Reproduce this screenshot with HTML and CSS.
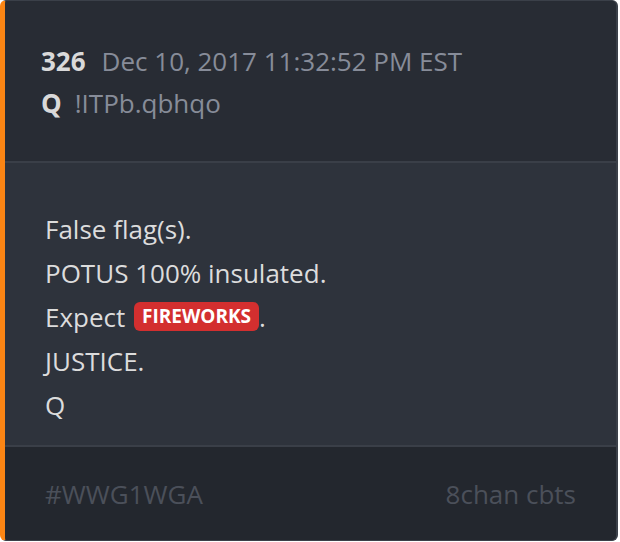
FILE: index.html
```html
<!DOCTYPE html>
<html>
<head>
<meta charset="utf-8">
<link rel="stylesheet" href="styles.css">
</head>
<body>
<div class="card">
  <div class="head">
    <div class="row"><span class="num">326</span><span class="meta">Dec 10, 2017 11:32:52 PM EST</span></div>
    <div class="row"><span class="num num-q">Q</span><span class="meta">!ITPb.qbhqo</span></div>
  </div>
  <div class="body">
    <p>False flag(s).</p>
    <p>POTUS 100% insulated.</p>
    <p>Expect <span class="badge">FIREWORKS</span>.</p>
    <p>JUSTICE.</p>
    <p>Q</p>
  </div>
  <div class="foot">
    <span>#WWG1WGA</span>
    <span>8chan cbts</span>
  </div>
</div>
</body>
</html>
```
FILE: styles.css
```css
html, body { margin: 0; padding: 0; background: #ffffff; }
body { width: 620px; height: 542px; font-family: "Open Sans", sans-serif; }
.card {
  box-sizing: border-box;
  width: 618px;
  height: 541px;
  border: 1px solid #3b4049;
  border-left: 5px solid #fb8514;
  border-right-width: 2px;
  border-radius: 6px;
  overflow: hidden;
  background: #2e333c;
  display: flex;
  flex-direction: column;
}
.head {
  background: #282c34;
  height: 162px;
  flex: none;
  box-sizing: border-box;
  padding: 39px 0 0 36px;
  border-bottom: 2px solid #3a3f48;
}
.row { display: flex; align-items: baseline; height: 42px; line-height: 42px; }
.num { color: #d9d9d9; font-weight: 700; font-size: 26px; margin-right: 16px; }
.num-q { margin-right: 13px; }
.meta { color: #878c99; font-size: 26px; }
.body {
  flex: 1;
  box-sizing: border-box;
  padding: 44px 0 0 40px;
  border-bottom: 2px solid #3a3f48;
}
.body p { margin: 0; color: #dcdcdc; font-size: 26px; line-height: 44px; }
.badge {
  display: inline-block;
  background: #d32f2f;
  color: #ffffff;
  font-weight: 700;
  font-size: 19px;
  line-height: 29px;
  padding: 0 8px;
  margin-left: 2px;
  border-radius: 6px;
  vertical-align: 4px;
}
.foot {
  flex: none;
  background: #23272e;
  height: 93px;
  box-sizing: border-box;
  padding: 0 40px;
  display: flex;
  justify-content: space-between;
  align-items: center;
  color: #4b505a;
  font-size: 26px;
}
```
